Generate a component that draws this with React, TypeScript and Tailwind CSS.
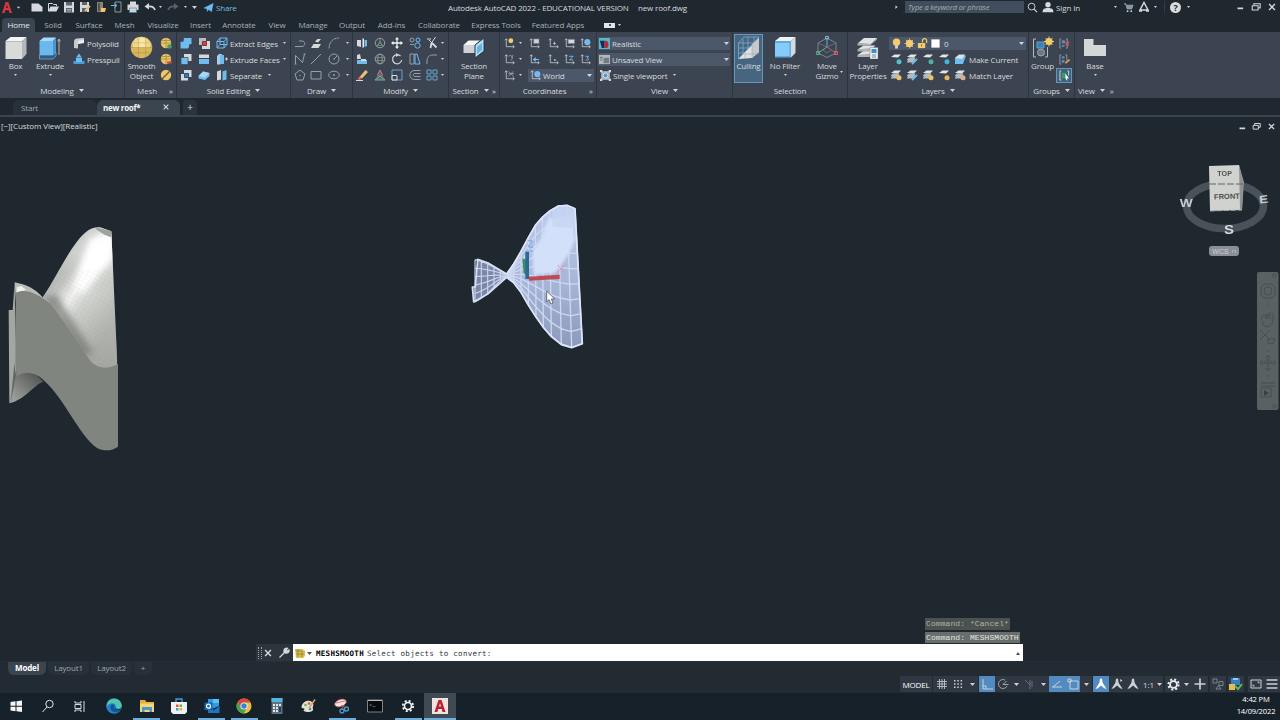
import React from 'react';
import clsx from 'clsx';

const L = '#d6d9db';
const B = '#6fbcf0';
const D = '#94a0ab';
const Y = '#ecc668';

// All ribbon glyphs live on a 12x12 grid
const art: Record<string, React.ReactNode> = {
  newFile: <path d="M.5 2.500h7L11.500 6v4.500H.5z" fill={L} />,
  open: <><path d="M1.500 10V2.500h4l1 1h3V5" stroke={L} /><path d="M1 10.500 3.500 5.500H12l-2.500 5z" fill={L} /></>,
  save: <><path d="M1 1h10v10.500H1z" fill={L} /><path d="M3 1h6v3.500H3zM3 7h6v4.500H3z" fill="#5c656d" /><path d="M4 8.500h4M4 10h4" stroke={L} strokeWidth=".6" /></>,
  saveAs: <><path d="M1 1h9v10H1z" fill={L} /><path d="M3 1h5v3H3zM3 7h5v4H3z" fill="#5c656d" /><path d="m6 10 5-5" stroke={Y} strokeWidth="1.800" /></>,
  webOpen: <><path d="M2 1h6v10H2z" fill="#8b8578" /><path d="M3 2h2v8H3z" fill="#4c5257" /><path d="M6 7h5l-1 4H6z" fill={Y} /></>,
  webSave: <><path d="M4 1h6v10H4z" stroke="#8e979e" /><path d="M0 4.500h5M3.500 2.500 6 4.500l-2.500 2" stroke={B} /></>,
  print: <><path d="M3 .5h6V4H3z" fill={L} /><path d="M.5 3.500h11V9H.5z" fill={L} /><path d="M2.500 7h7v4.500h-7z" fill="#bcd9ec" stroke="#6b7780" strokeWidth=".6" /></>,
  undo: <><path d="M11 9C10 6 7 5 3.500 5.500" stroke={L} strokeWidth="1.700" /><path d="M.5 5.500 5 2v6.500z" fill={L} /></>,
  redo: <><path d="M1 9c1-3 4-4 7.500-3.500" stroke="#59626a" strokeWidth="1.700" /><path d="M11.500 5.500 7 2v6.500z" fill="#59626a" /></>,
  plane: <path d="M.5 6.500 11.500 1 9.500 11 6 8.500 4.500 11 4 7.500z" fill={B} stroke="#2a6fa0" strokeWidth=".3" />,
  search: <><circle cx="5" cy="5" r="3.700" stroke={L} /><path d="m7.700 7.700 3.300 3.300" stroke={L} strokeWidth="1.300" /></>,
  person: <><circle cx="6" cy="3.700" r="2.700" fill={L} /><path d="M.5 11.200c.3-3.500 2-4.200 5.500-4.200s5.200.7 5.500 4.200z" fill={L} /></>,
  cart: <><path d="M1 2h2l1.500 5.500h5L11 3.500H3.500" stroke={D} fill="#8b959d" /><circle cx="5" cy="10" r="1" fill={L} /><circle cx="9" cy="10" r="1" fill={L} /></>,
  autodesk: <path d="M6 1.500 10 9H2zM1 10h3M8 10h3" stroke={L} strokeWidth="1.500" />,
  polysolid: <><path d="M1 5c0-2 1-3.500 3-3.500L11 1v5L7 6.500 5 7v4.500L1 11z" fill="#c9cccf" /><path d="M5 7V5.500C5 4 6 3.500 7 3.500L11 3v3l-4 .5z" fill="#eceeef" /></>,
  presspull: <><path d="M.5 8h11v3H.5z" fill="#4a9ed6" /><path d="M3 4.500h6V9H3z" fill={B} /><path d="M6 .5 8.500 4h-5z" fill={B} /></>,
  sphereAdd: <><circle cx="6" cy="6" r="5.200" fill={Y} /><path d="M1 6h10M6 1v10M2 3.500h8" stroke="#957633" strokeWidth=".6" /><circle cx="9.500" cy="9.500" r="2.300" fill="#45a15d" /></>,
  sphereSub: <><circle cx="6" cy="6" r="5.200" fill={Y} /><path d="M1 6h10M6 1v10M2 3.500h8" stroke="#957633" strokeWidth=".6" /><path d="M7 9.500h5" stroke="#c8443d" strokeWidth="2" /></>,
  sphereCut: <><circle cx="6" cy="6" r="5.200" fill={Y} /><path d="m2 10 8-8" stroke="#6e6138" strokeWidth="1.500" /></>,
  union: <path d="M4 1h7.500v6L9 7.500V10l-1 1.500H.5V5L3.500 4.500z" fill={B} />,
  subtract: <><path d="M1 1h7v7H1z" fill="#b5bcc2" /><path d="M4 4h8v8H4z" fill={L} /><path d="M4.500 4.500h4v4h-4z" fill="#c7484b" stroke="#8f2f33" /></>,
  intersect: <><path d="M4 1h7.500v7H8v3.500H1V5h3z" fill={L} /><path d="M4.500 4.500h4v4h-4z" fill="#387bb0" stroke="#26516f" /></>,
  interfere: <><path d="M4 1h7.500v7H4z" fill={L} /><path d="M1 4.500h7v7H1z" fill={B} stroke="#3a454f" strokeWidth=".7" /></>,
  slice: <><path d="M1 1.500h10v3.500H1z" fill={L} /><path d="M1 6h10v5H1z" fill={B} /></>,
  thicken: <><path d="M.5 7 5 2.500l6.500 1.500v3L7 11 .5 9.500z" fill={B} /><path d="M.5 7 5 2.500l6.500 1.500L7 8.500z" fill="#a9d8f6" /></>,
  extractEdges: <path d="M1 4.500 4 1h7v6.500L8 11H1zM1 4.500h7V11M8 4.500 11 1M4 1v6.500L1 11M4 7.500h7" stroke={B} />,
  extrudeFaces: <><path d="M1 3 3 1h3v9l-2 1.500H1z" fill="#a8cde6" /><path d="M4 2h4v9H4z" fill={B} /><path d="M8.500 6H10m0-1.500L11.800 6 10 7.500z" fill={L} stroke={L} strokeWidth=".5" /></>,
  separate: <><path d="M1 2.500 5 1v9.500L1 11.500z" fill={L} /><path d="M6.500 2.500 10.500 1v9.500l-4 1z" fill={B} /></>,
  polyline: <path d="M1 9.500h7c4-.5 3.500-5.500 0-5.500H5" stroke={D} />,
  helix: <><path d="m1 11 2.500-4H11l-2.500 4z" fill={L} /><path d="M5 4.500 7.500 2H11L8 5.500z" fill={L} /></>,
  arc: <path d="M1 11.500C1 5 5 1 11 1" stroke={D} strokeDasharray="3 .5" />,
  spline: <path d="M1.500 11V2.500l7 7L10.500 1M.5 11h2M9.500 1h2" stroke={D} />,
  line: <path d="M1 11 11 1" stroke={D} />,
  circle: <><circle cx="6" cy="6" r="5" stroke={D} /><path d="m6 6 3.500-3.500" stroke={D} /><circle cx="6" cy="6" r=".8" fill={D} /></>,
  polygon: <><path d="m6 1 5 4-2 6H3L1 5z" stroke={D} /><circle cx="6" cy="6.500" r=".7" fill={D} /></>,
  rect: <path d="M1 2.500h10v7.500H1z" stroke={D} />,
  ellipse: <><ellipse cx="6" cy="6" rx="5.300" ry="3.800" stroke={D} /><circle cx="6" cy="6" r="1" fill={D} /></>,
  mirror3d: <><path d="M1 3h4v7l-4-1z" fill={L} /><path d="M6.500 1 8 2v8l-1.500 1z" fill="#eee" /><path d="M8.500 3H11v6l-2.500 1z" fill={B} /></>,
  gizmo: <><circle cx="6" cy="6" r="4.700" stroke={D} /><path d="M6 1v5M6 6 2 9.500" stroke="#c0686c" /><path d="m6 6 4 3.500M3.500 8.500 6 4l2.500 4.500z" stroke="#5d9a86" strokeWidth=".8" /></>,
  move: <><path d="M6 1.500v9M1.500 6h9" stroke="#f2f3f4" strokeWidth="1.300" /><path d="M6 0 8 2.500H4zM6 12l2-2.500H4zM0 6l2.500-2v4zM12 6 9.500 4v4z" fill="#f2f3f4" /></>,
  copy: <><circle cx="3" cy="3" r="2" stroke={D} /><circle cx="9" cy="3" r="2" stroke={B} /><circle cx="8.500" cy="8.500" r="2.700" stroke={B} /><path d="M1 7.500h4" stroke={D} /></>,
  trim: <><path d="M1 2h4M9.500 0 5.500 6M3 3l3 3" stroke={L} /><path d="m5.500 6-1 5M6 6l4.500 4.500" stroke={L} strokeWidth="1.800" /></>,
  align3d: <><path d="M1 2 4 1l1 5H1z" fill={L} /><path d="M1 7h10v4H1z" fill={B} /><path d="M5 6h5v2H5z" fill={L} /></>,
  rotate3d: <><circle cx="6" cy="6" r="4.800" stroke={D} /><ellipse cx="6" cy="6" rx="2.200" ry="4.800" stroke="#72aa95" /><path d="M1 4.500h10M1 7.500h10" stroke="#b48287" strokeWidth=".7" /></>,
  rotate: <><path d="M9.500 3A4.600 4.600 0 1 0 10.700 7" stroke={L} strokeWidth="1.200" /><path d="M5 0v4l3-2z" fill={L} /></>,
  stretch: <><path d="M1 1h4v10H1z" stroke={D} /><path d="M6 1h2l3 10H6z" stroke={B} /></>,
  fillet: <path d="M1 11V8c0-4 2-6 6-6h4" stroke={D} />,
  erase: <><path d="m3.500 8 6-7L12 3 6 9.500z" fill="#e9c079" /><path d="m3.500 7.500 2.500 2L3.500 11 1.500 10z" fill="#e6605a" /><path d="M0 11.500h7" stroke={L} /></>,
  scale3d: <><path d="m6 1 5 10H1z" fill="#59666f" /><path d="M6 1 3.500 6 6 8l2.500-2z" stroke="#c9797c" /><path d="M6 7 1 11h10z" stroke="#78ad98" /></>,
  scale: <><path d="M1 1h10v10H1z" stroke={B} strokeWidth=".8" /><path d="M1 6.500h5V11H1z" stroke={L} /></>,
  offset: <path d="M11.500 1.500H5C-.5 2-.5 10 5 10.500h6.500M11.500 4.500H6c-2.500 0-2.500 3 0 3h5.500" stroke={D} />,
  array: <path d="M1 1h4v4H1zM7 1h4v4H7zM1 7h4v4H1zM7 7h4v4H7z" stroke="#68a5cf" />,
  ucs: <path d="M2.500 1v8.500H11M1 2.500 2.500.8 4 2.500M9.500 8 11.300 9.500 9.500 11" stroke={L} strokeWidth=".8" />,
  viewport: <><path d="M2 2h8v8H2z" fill="#8fa0ad" stroke={L} /><circle cx="6" cy="6" r="2.700" fill="#4f97cf" stroke="#e8ecee" /><path d="M0 0h2.500v2.500H0zM9.500 0H12v2.500H9.500zM0 9.500h2.500V12H0zM9.500 9.500H12V12H9.500z" fill={L} /></>,
  visual: <><path d="M0 0h12v12H0z" fill="#57b9c8" /><path d="M1 3h5v8H3z" fill="#122c66" /><path d="M6 3h2c3 1 3 5 1 8H6z" fill="#b32c34" /></>,
  namedView: <><path d="M0 1h12v10H0z" fill="#b4b9bb" /><path d="M1 3h3v2H1zM5 4h6v6H5zM1 6h3v1H1z" fill="#727b82" /></>,
  bulb: <><circle cx="6" cy="4.500" r="4" fill="#f6cb69" /><path d="M4.500 8h3v3.500h-3z" fill={L} /></>,
  sun: <><circle cx="6" cy="6" r="4" fill="#f6cb69" /><path d="M6 .5v11M.5 6h11M2 2l8 8M10 2l-8 8" stroke="#f6cb69" strokeWidth=".8" /></>,
  lock: <><path d="M1 5.500h8V11H1z" fill="#f6cb69" /><path d="M6 5V3a2 2 0 0 1 4.500 0v2.500" stroke="#f6cb69" strokeWidth="1.300" /><path d="M4.500 7h1v2h-1z" fill="#605438" /></>,
  swatch: <path d="M1.500 1.500h9v9h-9z" fill="#fff" />,
  groupDel: <><path d="M2.500 1H1v10h1.500M7.500 1H9v10H7.500" stroke={D} /><path d="M3 2.500h3.500V6H3zM3 7.500h3v2H3z" fill="#5a8db4" /><path d="m7 4 4 4M11 4 7 8" stroke="#d4535a" strokeWidth="1.500" /></>,
  groupEdit: <><path d="M2.500 1H1v10h1.500M7 1h1.500v6" stroke={D} /><path d="M3 2.500h3V5H3zM3 6.500h3v3H3z" fill="#5a8db4" /><path d="m7 10 4.500-4" stroke="#eaa35c" strokeWidth="1.800" /></>,
  groupPick: <><path d="M2.500 1H1v10h1.500M9 1h1.500v5" stroke={L} /><path d="M3 3h5v6H3z" fill="#3c9c60" /><path d="m7 4 4 5H9v3L7 9z" fill="#fff" /></>,
  wrench: <path d="m1.500 10.500 5-5M6 3.500C6 1.500 8 .8 9.500 1.300L8 3l1 1.300L11 3c.5 2-1.500 3.500-3.500 3L6 5z" stroke={L} strokeWidth="1.300" fill={L} />,
  close: <path d="m2.500 2.500 7 7M9.500 2.500l-7 7" stroke={L} strokeWidth="1.700" />,
  restore: <><path d="M3.500 4V2H11v5H9" stroke={L} strokeWidth="1.300" /><path d="M1.500 4.500h7V9.500h-7z" stroke={L} strokeWidth="1.300" /></>,
  min: <path d="M2 8.500h7.500" stroke={L} strokeWidth="2.300" />,
  yellowMesh: <><path d="M1 2h7.500L11 4v5L9 11H2z" fill="#d8bf4b" /><path d="M2 4h6v6M4 2v8M2 7h8" stroke="#8c7a35" strokeWidth=".7" /></>,
};

// layer tools: a stack or sheet plus a small badge
const layerArt = (stack: boolean, badge: string) => (
  <>
    {stack && <path d="M1 8.500 3.500 6.500h6L8 9.500H1zM1 6.200 3.500 4.500h6L8 7.200H1z" fill="#b5bcc1" />}
    <path d="m1 4 3.500-2.500H11L8 4.500z" fill="#e3e5e6" />
    {badge === 'edit' ? <path d="m6 11 5-5" stroke={B} strokeWidth="1.800" /> : <circle cx="9" cy="8.700" r="2.500" fill={badge} />}
  </>
);
art.layOff = layerArt(false, '#54c0c8');
art.layIso = layerArt(true, 'edit');
art.layFrz = layerArt(false, '#4eb0a5');
art.layLock = layerArt(false, '#3eb6d8');
art.layCur = <><path d="m1 5 3-2.500h8L9 11H1z" fill={B} /><path d="m1 5 4-3.500h6L8 6z" fill="#dce1e4" /></>;
art.layOn = layerArt(true, '#f0c35e');
art.layUniso = layerArt(true, 'edit');
art.layThw = layerArt(true, '#f0c35e');
art.layUnl = layerArt(false, '#e9b658');
art.layMatch = layerArt(true, '#dfac8c');

// UCS variants share the axis tripod
const ucsMark: Record<string, React.ReactNode> = {
  ucsBulb: <circle cx="7.500" cy="3" r="2.600" fill="#f6cb69" />,
  ucsNamed: <path d="M5 1h6v5H5z" fill="#cdd2d5" stroke="#69757e" strokeWidth=".6" />,
  ucsOrigin: <path d="M7 4v3.500M5.500 6h3" stroke={L} strokeWidth=".8" />,
  ucsFace: <path d="M4.500 1.500h7v4.500h-7z" fill={L} stroke="#78838b" strokeWidth=".7" />,
  ucsWorld: <circle cx="8" cy="4.500" r="3.300" fill={B} />,
  ucsIcon: <path d="M5 2.500c4-3 6 3 2 4.500M8 4l2-3" stroke={D} />,
  ucsPrev: <path d="M11 6H6m1.500-2L5 6l2.500 2" stroke={B} strokeWidth="1.300" />,
  ucsPoint: <path d="M6.500 5.500h2v2h-2z" fill={B} />,
  ucsZ: <path d="M5.500 2.500H10l-4 4h4" stroke={B} />,
  ucs3: <path d="M6 2.500h3.500L7.500 4.500c3 0 2 3-1.500 2" stroke={B} />,
  ucsView: <path d="M5 1.500 10.500 7M10 1.500 5 7M5 4h6" stroke={D} />,
};
Object.keys(ucsMark).forEach((k) => {
  art[k] = <>{art.ucs}{ucsMark[k]}</>;
});

const Ic = ({ n, s = 12 }: { n: string; s?: number }) => (
  <svg width={s} height={s} viewBox="0 0 12 12" fill="none" className="shrink-0">
    {art[n]}
  </svg>
);

const Caret = ({ className }: { className?: string }) => (
  <svg width="5" height="3" viewBox="0 0 5 3" className={clsx('shrink-0', className)}>
    <path d="M0 0h5L2.500 3z" fill="#cfd3d6" />
  </svg>
);

const TinyCaret = ({ className }: { className?: string }) => (
  <svg width="3" height="2" viewBox="0 0 3 2" className={clsx('shrink-0', className)}>
    <path d="M0 0h3L1.500 2z" fill="#cfd3d6" />
  </svg>
);

const Cell = ({ w, children }: { w: string; children?: React.ReactNode }) => (
  <div className={clsx('flex h-full shrink-0 items-center justify-center', w)}>{children}</div>
);

const Row = ({ children }: { children: React.ReactNode }) => (
  <div className="flex h-4 shrink-0 items-center">{children}</div>
);

interface PanelProps {
  w: string;
  title: string;
  caret?: boolean;
  launcher?: boolean;
  children: React.ReactNode;
}

const Panel = ({ w, title, caret, launcher, children }: PanelProps) => (
  <section className={clsx('flex shrink-0 flex-col border-r border-[#2c353f]', w)}>
    <div className="flex h-[52px] pt-[3px]">{children}</div>
    <div className="flex h-[13px] items-center">
      <div className="flex flex-1 items-center justify-center gap-[5px]">
        {title}
        {caret && <Caret />}
      </div>
      {launcher && <span className="w-[7px] text-[8px] leading-none">»</span>}
    </div>
  </section>
);

const BigTool = ({ w, icon, lines, caret }: { w: string; icon: React.ReactNode; lines: string[]; caret?: boolean }) => (
  <div className={clsx('flex shrink-0 flex-col items-center', w)}>
    <div className="flex h-[25px] items-center">{icon}</div>
    {lines.map((t) => (
      <span key={t} className="flex h-[10.5px] items-center whitespace-nowrap">{t}</span>
    ))}
    {caret && <TinyCaret className="mt-[3px]" />}
  </div>
);

const IconGrid = ({ rows, cols }: { rows: string[][]; cols: string[] }) => (
  <div className="flex flex-col">
    {rows.map((r) => (
      <Row key={r[0]}>
        {r.map((n, i) => (
          <Cell key={n + i} w={cols[i]}>{n === 'caret' ? <TinyCaret /> : <Ic n={n} s={n.startsWith('ucs') ? 11 : 12} />}</Cell>
        ))}
      </Row>
    ))}
  </div>
);

const TitleBar = () => (
  <header className="flex h-4 items-center bg-[#1f272f] pb-[2px]">
    <Cell w="w-[14px]">
      <svg width="10" height="11" viewBox="0 0 11 12"><path d="M0 12 4 0h3l4 12H8L7.500 9h-4L3 12zM4.500 6.500h2L5.500 3z" fill="#d8353c" fillRule="evenodd" /></svg>
    </Cell>
    <Cell w="w-[15px]"><Caret className="-ml-[6px] scale-75" /></Cell>
    {['newFile', 'open', 'save', 'saveAs', 'webOpen', 'webSave', 'print'].map((n) => (
      <Cell key={n} w="w-4"><Ic n={n} s={12} /></Cell>
    ))}
    <Cell w="w-[17px]"><Ic n="undo" /></Cell>
    <Cell w="w-[5px]"><TinyCaret /></Cell>
    <Cell w="w-[20px]"><Ic n="redo" /></Cell>
    <Cell w="w-[4px]"><TinyCaret /></Cell>
    <Cell w="w-[15px]"><Caret /></Cell>
    <Cell w="w-[12px]"><Ic n="plane" s={11} /></Cell>
    <span className="ml-[2px] w-[232px] text-[#79b9e2]">Share</span>
    <span className="w-[190px] whitespace-nowrap tracking-[-0.15px]">Autodesk AutoCAD 2022 - EDUCATIONAL VERSION</span>
    <span className="w-[249px] whitespace-nowrap">new roof.dwg</span>
    <Cell w="w-[18px]"><TinyCaret className="-rotate-90 scale-125" /></Cell>
    <div className="flex h-3 w-[119px] items-center bg-[#414d5c] pl-[3px] text-[7.500px] italic text-[#a6adb5]">Type a keyword or phrase</div>
    <Cell w="w-[17px]"><Ic n="search" s={11} /></Cell>
    <Cell w="w-[13px]"><Ic n="person" /></Cell>
    <span className="ml-[2px] w-[54px] tracking-[-0.1px]">Sign In</span>
    <Cell w="w-[10px]"><TinyCaret /></Cell>
    <Cell w="w-4"><Ic n="cart" s={11} /></Cell>
    <Cell w="w-4"><Ic n="autodesk" s={12} /></Cell>
    <Cell w="w-[7px]"><TinyCaret /></Cell>
    <div className="ml-[5px] h-3 w-px bg-[#333c46]" />
    <Cell w="w-[21px]">
      <span className="flex size-[11px] items-center justify-center rounded-full bg-[#d9dcde] text-[9px] font-bold text-[#1f272f]">?</span>
    </Cell>
    <Cell w="w-[4px]"><TinyCaret /></Cell>
    <div className="ml-auto flex">
      <Cell w="w-4"><Ic n="min" s={9} /></Cell>
      <Cell w="w-4"><Ic n="restore" s={10} /></Cell>
      <Cell w="w-4"><Ic n="close" s={10} /></Cell>
    </div>
  </header>
);

const menu: [string, string][] = [
  ['Home', 'w-[33px]'], ['Solid', 'w-[36px]'], ['Surface', 'w-[36px]'], ['Mesh', 'w-[35px]'], ['Visualize', 'w-[42px]'],
  ['Insert', 'w-[33px]'], ['Annotate', 'w-[44px]'], ['View', 'w-[32px]'], ['Manage', 'w-[40px]'], ['Output', 'w-[38px]'],
  ['Add-ins', 'w-[41px]'], ['Collaborate', 'w-[54px]'], ['Express Tools', 'w-[60px]'], ['Featured Apps', 'w-[64px]'],
];

const MenuTabs = () => (
  <nav className="flex h-4 bg-[#1f272f] pl-[2px] pt-[2px] tracking-[-0.015em] text-[#a9b0b7]">
    {menu.map(([t, w]) => (
      <div key={t} className={clsx('flex shrink-0 items-center justify-center whitespace-nowrap pb-[2px]', w, t === 'Home' && 'rounded-t-sm bg-[#3b4552] text-[#e3e6e8]')}>{t}</div>
    ))}
    <div className="ml-[14px] flex items-center gap-[3px]">
      <div className="flex h-[5px] w-[11px] items-center justify-center bg-[#e3e6e8]"><div className="size-[2px] bg-[#4c555e]" /></div>
      <TinyCaret />
    </div>
  </nav>
);

const Combo = ({ icon, label, className, size }: { icon: string; label: string; className: string; size?: number }) => (
  <div className={clsx('flex h-[13px] items-center bg-[#4c586a] px-[2px]', className)}>
    <Ic n={icon} s={size ?? 11} />
    <span className="ml-[2px] flex-1 whitespace-nowrap">{label}</span>
    <Caret />
  </div>
);

const BoxIcon = () => (
  <svg width="22" height="24" viewBox="0 0 22 24"><path d="m.5 5 5-4H21.500L17 5.500H.5z" fill="#f5f5f4" /><path d="M.5 5.500H17V23H.5z" fill="#d9dada" /><path d="m17 5.500 4.500-4.500v17L17 23z" fill="#b5b7b8" /></svg>
);
const ExtrudeIcon = () => (
  <svg width="22" height="24" viewBox="0 0 22 24"><path d="m.5 5 4-3.500H17L14 5z" fill="#a9dafa" /><path d="M.5 5H14v14H.5z" fill="#69b8ef" /><path d="m14 5 3-3.500v15L14 19z" fill="#4897d1" /><path d="M.5 19H14l3-2.500V20l-3 3H.5z" fill="#315a7c" stroke="#7cc5f5" strokeWidth=".6" /><path d="M20 4v15M18.700 5.500 20 3l1.300 2.500" stroke="#ccd2d6" fill="none" strokeWidth=".8" /></svg>
);
const SmoothIcon = () => (
  <svg width="23" height="23" viewBox="0 0 22 22"><circle cx="11" cy="11" r="10.300" fill="#d9b75c" /><path d="M2 6.500 5.500 2 11 .8l5.500 1.700L20 6.500l-1 5H3z" fill="#efd88b" /><path d="M9 2h5v9H9z" fill="#f7e7ab" /><path d="M1 11h20M3 16h16M8 11v9M15 11v9" stroke="#b3954a" strokeWidth=".6" /><path d="M2.500 6.500h17M8 1.500V11M15 1.500V11" stroke="#c9ab5c" strokeWidth=".5" /></svg>
);
const SectionIcon = () => (
  <svg width="22" height="22" viewBox="0 0 22 22"><path d="m.5 8 5-4.500H17L12 8z" fill="#f5f5f5" /><path d="M.5 8H12v8H.5z" fill="#cfd2d4" /><path d="m12 8 9-7v13l-9 7z" fill="#b8dcf1" stroke="#2a3744" /><path d="m14 10 5-4v7l-5 4z" fill="#63b5e8" /></svg>
);
const CullingIcon = () => (
  <svg width="22" height="24" viewBox="0 0 22 24"><path d="M.5 7 6 1h15M.5 7v16L21 1M.5 7H16M.5 12h11M.5 17H7M5 3v14M10 1v15M16 1v6" stroke="#78aed2" strokeWidth=".8" fill="none" /><path d="M.5 23 21 2v14l-7 6z" fill="#dfe0df" /><path d="m14 8.500 7-6.500v14l-7 6z" fill="#c7cac9" /><path d="M7 17v5.500M14 9v13M7 18h14" stroke="#969b9d" strokeWidth=".5" /></svg>
);
const FilterIcon = () => (
  <svg width="22" height="23" viewBox="0 0 22 23"><path d="m1 5 5-4h15.500L17 5z" fill="#f1f3f4" /><path d="m17 5 4.500-4v16L17 21.500z" fill="#d5d9dc" /><path d="M1 5h16v16.500H1z" fill="#5cabe5" /><path d="M1 7h14.500v13H1z" fill="#85ccf8" /></svg>
);
const GizmoIcon = () => (
  <svg width="22" height="23" viewBox="0 0 22 23" fill="none"><path d="m11 2 9 5v10l-9 4.500L2 17V7z" stroke="#8994a0" strokeWidth=".8" /><path d="M11 11V2" stroke="#75a7cc" /><path d="m11 11-9 6" stroke="#69a886" /><path d="m11 11 9 6" stroke="#c55d67" /><path d="M2 7l9 4 9-4M7 14l4 3 4-3" stroke="#6f7f90" strokeWidth=".7" /><path d="M9.500.5h3V3h-3z" stroke="#82b2d3" /><path d="M.6 15.500h3v3h-3z" stroke="#60b080" /><path d="M18.500 15.500h3v3h-3z" stroke="#d75f69" /></svg>
);
const LayerPropsIcon = () => (
  <svg width="22" height="22" viewBox="0 0 22 22"><path d="m.5 18 6-4h12l-5 4zM.5 12.500l6-4h12l-5 4.500zM.5 6.500 7 1h13l-6 6z" fill="#e2e3e3" /><path d="M.5 6.500v2H13l7-6V1L14 7zM.5 12.500v2H13l5-4M.5 18v2H13l5-4" fill="#aeb3b6" /><path d="M13 10.500h8V22h-8z" fill="#edf0f1" stroke="#65717a" strokeWidth=".4" /><path d="M14.500 12h5v4h-5z" fill="#3e8fca" /><path d="M15 18h4M15 20h4" stroke="#7d858a" /></svg>
);
const GroupIcon = () => (
  <svg width="22" height="23" viewBox="0 0 22 23" fill="none"><path d="M4 3H1.500v18H4M13 21h2.500V11" stroke="#b5bcc2" /><path d="M5 6h7v6H5z" fill="#3f7fae" stroke="#5da3d5" /><circle cx="9" cy="16.500" r="3.500" fill="#6c7780" stroke="#a0a8af" /><circle cx="17" cy="5.500" r="3.600" fill="#f6cb69" /><path d="M17 .5v10M12 5.500h10M13.500 2l7 7M20.500 2l-7 7" stroke="#f6cb69" /></svg>
);
const BaseIcon = () => (
  <svg width="22" height="17" viewBox="0 0 22 17"><path d="M0 0h9.500v6H22v11H0z" fill="#d4d6d7" /></svg>
);

const Ribbon = () => (
  <div className="flex h-[66px] bg-[#3b4450]">
    <Panel w="w-[125px]" title="Modeling" caret>
      <BigTool w="w-[31px]" icon={<BoxIcon />} lines={['Box']} caret />
      <BigTool w="w-[38px]" icon={<ExtrudeIcon />} lines={['Extrude']} caret />
      <div className="flex flex-col pl-[4px]">
        <Row><Ic n="polysolid" /><span className="ml-[2px]">Polysolid</span></Row>
        <Row><Ic n="presspull" /><span className="ml-[2px]">Presspull</span></Row>
      </div>
    </Panel>
    <Panel w="w-[52px]" title="Mesh" launcher>
      <BigTool w="w-[33px]" icon={<SmoothIcon />} lines={['Smooth', 'Object']} />
      <IconGrid rows={[['sphereAdd'], ['sphereSub'], ['sphereCut']]} cols={['w-[16px]']} />
    </Panel>
    <Panel w="w-[114px]" title="Solid Editing" caret>
      <IconGrid rows={[['union', 'subtract', 'extractEdges'], ['interfere', 'slice', 'extrudeFaces'], ['intersect', 'thicken', 'separate']]} cols={['w-[18px]', 'w-[18px]', 'w-[17px]']} />
      <div className="flex flex-1 flex-col">
        <Row><span className="w-[53px] whitespace-nowrap">Extract Edges</span><TinyCaret /></Row>
        <Row><span className="w-[53px] whitespace-nowrap">Extrude Faces</span><TinyCaret /></Row>
        <Row><span className="w-[38px]">Separate</span><TinyCaret /></Row>
      </div>
    </Panel>
    <Panel w="w-[62px]" title="Draw" caret>
      <IconGrid
        rows={[['polyline', 'helix', 'arc', 'caret'], ['spline', 'line', 'circle', 'caret'], ['polygon', 'rect', 'ellipse', 'caret']]}
        cols={['w-[17px]', 'w-[15px]', 'w-[22px]', 'w-[5px]']}
      />
    </Panel>
    <Panel w="w-[96px]" title="Modify" caret>
      <IconGrid
        rows={[
          ['mirror3d', 'gizmo', 'move', 'copy', 'trim', 'caret'],
          ['align3d', 'rotate3d', 'rotate', 'stretch', 'fillet', 'caret'],
          ['erase', 'scale3d', 'scale', 'offset', 'array', 'caret'],
        ]}
        cols={['w-[17px]', 'w-[20px]', 'w-[13px]', 'w-[23px]', 'w-[11px]', 'w-[11px]']}
      />
    </Panel>
    <Panel w="w-[51px]" title="Section" caret launcher>
      <BigTool w="w-[50px]" icon={<SectionIcon />} lines={['Section', 'Plane']} />
    </Panel>
    <Panel w="w-[97px]" title="Coordinates" launcher>
      <div className="flex flex-col">
        <IconGrid
          rows={[['ucsBulb', 'caret', 'ucsNamed', 'ucsOrigin', 'ucsFace', 'ucsWorld'], ['ucsIcon', 'caret', 'ucsPrev', 'ucsPoint', 'ucsZ', 'ucs3']]}
          cols={['w-[18px]', 'w-[5px]', 'w-[22px]', 'w-[16px]', 'w-[16px]', 'w-[16px]']}
        />
        <Row>
          <Cell w="w-[18px]"><Ic n="ucsView" s={11} /></Cell>
          <Cell w="w-[5px]"><TinyCaret /></Cell>
          <Combo icon="ucsWorld" label="World" className="ml-[5px] w-[66px]" />
        </Row>
      </div>
    </Panel>
    <Panel w="w-[136px]" title="View" caret>
      <div className="flex flex-col pl-px">
        <Row><Combo icon="visual" label="Realistic" className="w-[132px] px-px" /></Row>
        <Row><Combo icon="namedView" label="Unsaved View" className="w-[132px] px-px" size={11} /></Row>
        <Row><Cell w="w-[15px]"><Ic n="viewport" s={11} /></Cell><span className="w-[60px] whitespace-nowrap">Single viewport</span><TinyCaret /></Row>
      </div>
    </Panel>
    <Panel w="w-[115px]" title="Selection">
      <div className="-mt-px ml-px h-[49px] w-[29px] border border-[#6298be] bg-[#47657f]">
        <BigTool w="w-[27px]" icon={<CullingIcon />} lines={['Culling']} />
      </div>
      <BigTool w="w-[44px]" icon={<FilterIcon />} lines={['No Filter']} caret />
      <BigTool w="w-[40px]" icon={<GizmoIcon />} lines={['Move', 'Gizmo']} />
      <TinyCaret className="-ml-[7px] mt-[36px]" />
    </Panel>
    <Panel w="w-[181px]" title="Layers" caret>
      <BigTool w="w-[40px]" icon={<LayerPropsIcon />} lines={['Layer', 'Properties']} />
      <div className="flex flex-col">
        <Row>
          <div className="ml-px flex h-[13px] w-[137px] items-center bg-[#4c586a] pr-[2px]">
            <Cell w="w-[14px]"><Ic n="bulb" s={11} /></Cell>
            <Cell w="w-[12px]"><Ic n="sun" s={11} /></Cell>
            <Cell w="w-[14px]"><Ic n="lock" s={11} /></Cell>
            <Cell w="w-[13px]"><Ic n="swatch" s={11} /></Cell>
            <span className="ml-[2px] flex-1">0</span>
            <Caret />
          </div>
        </Row>
        {[['layOff', 'layIso', 'layFrz', 'layLock', 'layCur', 'Make Current'], ['layOn', 'layUniso', 'layThw', 'layUnl', 'layMatch', 'Match Layer']].map((r) => (
          <Row key={r[0]}>
            {r.slice(0, 5).map((n) => <Cell key={n} w="w-4"><Ic n={n} /></Cell>)}
            <span className="ml-px whitespace-nowrap">{r[5]}</span>
          </Row>
        ))}
      </div>
    </Panel>
    <Panel w="w-[46px]" title="Groups" caret>
      <BigTool w="w-[27px]" icon={<GroupIcon />} lines={['Group']} />
      <div className="flex flex-col">
        <Row><Cell w="w-[16px]"><Ic n="groupDel" s={11} /></Cell></Row>
        <Row><Cell w="w-[16px]"><Ic n="groupEdit" s={11} /></Cell></Row>
        <Row><div className="flex h-[15px] w-[16px] items-center justify-center border border-[#6298be] bg-[#42617a]"><Ic n="groupPick" s={11} /></div></Row>
      </div>
    </Panel>
    <section className="flex w-[42px] flex-col">
      <div className="flex h-[52px] pt-[3px]"><BigTool w="w-[40px]" icon={<BaseIcon />} lines={['Base']} caret /></div>
      <div className="flex h-[13px] items-center gap-[5px] pl-[3px]">View <Caret /><span className="text-[8px] leading-none">»</span></div>
    </section>
  </div>
);

const FileTabs = () => (
  <div className="flex h-[19px] items-end border-b-2 border-[#3b4550] bg-[#1f272f] pl-[13px]">
    <div className="flex h-[15px] w-[84px] items-center rounded-t-md bg-[#28313a] pb-px pl-[8px] text-[#a0a7ae]">Start</div>
    <div className="flex h-[15px] w-[83px] items-center rounded-t-md bg-[#3b4550] pb-px pl-[6px] pr-[10px] text-[#f3f4f5]">
      <span className="flex-1 font-bold tracking-[-0.035em]">new roof*</span>
      <Ic n="close" s={8} />
    </div>
    <div className="ml-[3px] flex h-[15px] w-[14px] items-center justify-center rounded-t-sm bg-[#2b343d] pb-px text-[10px]">+</div>
  </div>
);

const Saddle = () => (
  <svg width="160" height="250" viewBox="0 0 480 750" className="absolute left-0 top-[93px]">
    <defs>
      <linearGradient id="lit" x1="130" y1="190" x2="345" y2="330" gradientUnits="userSpaceOnUse">
        <stop offset="0" stopColor="#a5a8a3" />
        <stop offset=".25" stopColor="#c3c5c2" />
        <stop offset=".42" stopColor="#f3f4f2" />
        <stop offset=".58" stopColor="#d5d7d3" />
        <stop offset="1" stopColor="#b7bab5" />
      </linearGradient>
      <linearGradient id="litDown" x1="0" y1="130" x2="0" y2="470" gradientUnits="userSpaceOnUse">
        <stop offset="0" stopColor="#fff" stopOpacity=".3" />
        <stop offset=".35" stopColor="#a3a69f" stopOpacity="0" />
        <stop offset="1" stopColor="#8c8f8a" stopOpacity=".45" />
      </linearGradient>
      <linearGradient id="under" x1="120" y1="490" x2="50" y2="570" gradientUnits="userSpaceOnUse">
        <stop offset="0" stopColor="#4e514e" />
        <stop offset="1" stopColor="#999c97" />
      </linearGradient>
      <filter id="soft"><feGaussianBlur stdDeviation="9" /></filter>
      <pattern id="facets" width="14" height="12" patternUnits="userSpaceOnUse" patternTransform="rotate(28)">
        <path d="M0 0h14v12" fill="none" stroke="#777a75" strokeOpacity=".11" strokeWidth="3" />
      </pattern>
      <clipPath id="upper"><path d="M128 262C160 215 195 145 220 110 245 75 268 48 300 52L334 64 352 465 334 480 280 480C255 450 225 390 180 345 165 310 140 280 128 262z" /></clipPath>
    </defs>
    <g clipPath="url(#upper)">
      <path d="M100 40h270v450H100z" fill="url(#lit)" />
      <path d="M100 40h270v450H100z" fill="url(#litDown)" />
      <path d="M270 85 335 70 338 145 250 250 220 230z" fill="#fff" filter="url(#soft)" />
      <path d="M128 262 170 255 280 430 240 440z" fill="#6f726d" opacity=".65" filter="url(#soft)" />
      <path d="M100 180h270v310H100z" fill="url(#facets)" />
      <path d="m285 52 48 10v20l-20-8-22-14z" fill="#9fa39e" />
    </g>
    <path d="M26 300h12l6-83 6 280-22 83z" fill="#a3a6a1" />
    <path d="m44 217 24 6c25 8 43 20 60 39l20 14-20 20-80-15z" fill="#b9bcb6" />
    <path d="m50 232 14-4 14 12-28 8z" fill="#f0f1ec" />
    <path d="M28 580 45 490c30-15 60-5 85 25-30 10-52 52-102 65z" fill="url(#under)" />
    <path d="M48 248C75 235 110 250 148 278 190 325 230 400 275 457 298 480 330 475 354 462V710C335 724 310 724 290 713 240 680 190 560 130 510 105 485 75 484 50 498L46 460z" fill="#81857f" />
    <path d="m43 460 5 36-16 80z" fill="#656965" />
  </svg>
);

const wing = { xs: [155, 176, 198, 220, 241, 262, 284, 310, 336, 360], top: [252, 222, 184, 143, 106, 82, 63, 48, 46, 56], bot: [262, 278, 307, 345, 381, 412, 439, 462, 472, 461], lean: [0, 0, 0, 0, 2, 3, 5, 9, 14, 22] };
const tail = { xs: [60, 79, 98, 117, 136, 155], top: [209, 214, 222, 232, 243, 252], bot: [336, 325, 310, 291, 272, 262], lean: [0, 0, 0, 0, 0, 0] };

const gridPaths = (m: typeof wing, n: number) => {
  const lines: string[] = [];
  for (let k = 0; k <= n; k++) {
    const t = k / n;
    lines.push('M' + m.xs.map((x, i) => `${x + m.lean[i] * t} ${m.top[i] + (m.bot[i] - m.top[i]) * t}`).join('L'));
  }
  m.xs.forEach((x, i) => {
    lines.push(`M${x} ${m.top[i]}L${x + m.lean[i]} ${m.bot[i]}`);
  });
  return lines.join('');
};

const wingOutline = 'M155 252 176 222 198 184 220 143 241 106 262 82 284 63 310 48 336 46 360 56 382 461 350 473 319 464 289 440 265 412 243 381 220 345 198 307 176 278 155 262';

const SelectedMesh = () => (
  <svg width="150" height="170" viewBox="0 0 450 510" className="absolute left-[455px] top-[73px]">
    <defs>
      <filter id="glow"><feGaussianBlur stdDeviation="5" /></filter>
      <linearGradient id="veil" x1="0" y1="50" x2="0" y2="470" gradientUnits="userSpaceOnUse">
        <stop offset="0" stopColor="#bccbed" />
        <stop offset=".5" stopColor="#a9b7d8" />
        <stop offset="1" stopColor="#8d9abb" />
      </linearGradient>
    </defs>
    <path d={wingOutline} fill="url(#veil)" />
    <path d="M68 208 98 218 155 252V262L98 312 56 336 52 291 61 291z" fill="#7b87a6" />
    <path d={gridPaths(wing, 9)} stroke="#cdd8f2" strokeWidth="4" fill="none" />
    <path d={gridPaths(tail, 5)} stroke="#c8d3ee" strokeWidth="3.500" fill="none" />
    <path d="M280 85 352 78 360 150 340 195 300 250 235 255 232 185 258 145z" fill="#d3e0fa" filter="url(#glow)" />
    <path d="m290 60 35-12 33 12 5 55-70-5z" fill="#c6d4f2" opacity=".8" />
    <path d={wingOutline} fill="none" stroke="#dce5fa" strokeWidth="5" strokeLinejoin="round" />
    <path d="M155 252 98 218 68 208 61 291 52 291 56 336 98 312 155 262" fill="none" stroke="#d5def3" strokeWidth="5" strokeLinejoin="round" />
    <path d="m202 205 12 5v45l-8-5z" fill="#39905a" />
    <path d="M211 185h11v82h-11z" fill="#2f6798" />
    <path d="M216 183h18M218 152l14 1-13 17 15 2" stroke="#6aa9ea" strokeWidth="3" fill="none" />
    <path d="m221 260 93-6v13l-93 5z" fill="#bf4a51" />
    <path d="m308 225 22 25M330 224l-24 24" stroke="#d894b2" strokeWidth="3" />
    <path d="M275 303v32l7-6 6 13 6-3-5-12h10z" fill="#fff" stroke="#323a49" strokeWidth="2" />
  </svg>
);

const ViewCube = () => (
  <div className="absolute left-[1178px] top-[45px] h-[96px] w-[92px] font-['Liberation_Sans'] font-bold leading-none tracking-normal">
    <svg width="92" height="80" viewBox="0 0 92 80" fill="none">
      <ellipse cx="47" cy="44" rx="38.500" ry="22.500" stroke="#495258" strokeWidth="7.500" />
      <path d="m31 4 30-1 4 17-1 28-32 1z" fill="#d0d2cf" />
      <path d="m61 3 5 17-2 28-2-1z" fill="#8f9290" />
      <path d="M31 22h34" stroke="#60645f" strokeDasharray="7 2" />
      <path d="m32 49 32-1" stroke="#a3a6a1" strokeDasharray="5 2" />
    </svg>
    <span className="absolute left-[40px] top-[9px] scale-x-110 text-[6.500px] text-[#4c504e]">TOP</span>
    <span className="absolute left-[36px] top-[31px] -rotate-2 text-[7.500px] text-[#4c504e]">FRONT</span>
    <span className="absolute left-[3px] top-[36px] scale-x-125 text-[11px] text-[#c8cccf]">W</span>
    <span className="absolute left-[82px] top-[32px] -rotate-6 scale-x-125 text-[11px] text-[#c8cccf]">E</span>
    <span className="absolute left-[47px] top-[62px] scale-x-125 text-[12px] text-[#d9dcde]">S</span>
    <div className="absolute left-[31px] top-[84px] flex h-[10px] w-[30px] items-center justify-center gap-[3px] rounded-[3px] bg-[#8b9097] text-[7px] font-normal text-[#cdd1d4]">
      WCS <span className="h-[3px] w-[4px] border border-b-0 border-[#a9aeb4]" />
    </div>
  </div>
);

const NavBar = () => (
  <svg width="22" height="138" viewBox="0 0 22 138" fill="none" className="absolute left-[1257px] top-[155px]">
    <rect width="21.500" height="138" rx="2" fill="#596162" />
    <g stroke="#454d50" strokeWidth=".9">
      <circle cx="17.500" cy="3.500" r="1.800" />
      <path d="M7 12h8l3 3v8l-3 3H7l-3-3v-8z" /><circle cx="11" cy="19" r="4" />
      <path d="M10 32h2M10 79h2M10 104h2" />
      <path d="M7 51c-6-6 0-10 3-6m-1-3v5m2-6v6m2-7v7m3-6v6c0 9-8 10-11 4" />
      <path d="m3 58 10 10M13 58 3 68M11 67h7l-2 5-5-1z" />
      <path d="M11 83v16M4 91h14M8 86l3-3 3 3M8 96l3 3 3-3M6 88l-3 3 3 3M16 88l3 3-3 3M7 90c2-3 7-3 8 1" />
      <path d="M4 111h14M4 114h14M4 116h10v9H4z" />
      <circle cx="17.500" cy="134" r="1.800" />
    </g>
    <path d="m7 118 5 3-5 3z" fill="#394144" />
  </svg>
);

const Viewport = () => (
  <main className="relative h-[544px] overflow-hidden bg-[#1f282f]">
    <div className="flex items-center justify-between pt-[4px] pl-px">
      <span className="leading-[10px] tracking-[-0.1px]">[−][Custom View][Realistic]</span>
      <div className="flex">
        <Cell w="w-[13px]"><Ic n="min" s={9} /></Cell>
        <Cell w="w-[14px]"><Ic n="restore" s={9} /></Cell>
        <Cell w="w-[17px]"><Ic n="close" s={9} /></Cell>
      </div>
    </div>
    <Saddle />
    <SelectedMesh />
    <ViewCube />
    <NavBar />
    <div className="absolute left-[925px] top-[501px] flex flex-col items-start gap-[2px] font-['Liberation_Mono'] text-[8px] tracking-[0.080px] text-[#adb2af]">
      <span className="h-[11.500px] bg-[#4b524f] px-px leading-[12px]">Command: *Cancel*</span>
      <span className="h-[11.500px] bg-[#686e6b] px-px leading-[12px] text-[#e4e6e3]">Command: MESHSMOOTH</span>
    </div>
    <div className="absolute left-[256px] top-[527px] flex h-[18px] w-[767px] items-center bg-[#2c343c]">
      <div className="ml-[2px] h-3 w-[4px] border-x border-dotted border-[#9aa1a7]" />
      <Cell w="w-[12px]"><Ic n="close" s={10} /></Cell>
      <Cell w="w-[19px]"><Ic n="wrench" s={12} /></Cell>
      <div className="flex h-full flex-1 items-center bg-white pl-px pr-[3px] font-['DejaVu_Sans_Mono'] text-[7.500px] tracking-[0.280px] text-[#33373a]">
        <Ic n="yellowMesh" />
        <svg width="5" height="3" viewBox="0 0 5 3" className="mx-px"><path d="M0 0h5L2.500 3z" fill="#4a4f55" /></svg>
        <span className="ml-[3px] font-bold tracking-[0.280px] text-black">MESHSMOOTH</span>
        <span className="ml-[3px] flex-1">Select objects to convert:</span>
        <svg width="4" height="3" viewBox="0 0 4 3"><path d="M0 3h4L2 0z" fill="#4a4f55" /></svg>
      </div>
    </div>
  </main>
);

const LayoutTab = ({ w, label, active }: { w: string; label: string; active?: boolean }) => (
  <div className={clsx('flex h-[13px] items-center justify-center rounded-b-md pb-[2px]', w, active ? 'bg-[#3b4550] font-bold text-white' : 'bg-[#28313a] text-[#9fa6ad]')}>{label}</div>
);

const StatusBtn = ({ w, on, children }: { w: string; on?: boolean; children: React.ReactNode }) => (
  <div className={clsx('flex h-4 shrink-0 items-center justify-center', w, on ? 'bg-[#528bc1]' : 'bg-[#303943]')}>{children}</div>
);

const St = ({ d, fill, color = '#cdd1d4', w = 1 }: { d: string; fill?: boolean; color?: string; w?: number }) => (
  <svg width="12" height="12" viewBox="0 0 12 12" fill={fill ? color : 'none'} stroke={fill ? 'none' : color} strokeWidth={w} className="shrink-0"><path d={d} /></svg>
);

const figure = 'M5 .8h2l.6 4 4 6.200-2.400-.7L6 7.500l-3.200 2.800L.4 11l4-6.200z';

const Gear = ({ size }: { size: number }) => (
  <svg width={size} height={size} viewBox="0 0 14 14" fill="none" stroke="#e9ebec">
    <circle cx="7" cy="7" r="3.700" strokeWidth="2" />
    <circle cx="7" cy="7" r="5.500" strokeWidth="2.200" strokeDasharray="2.200 2.120" />
  </svg>
);

const StatusArea = () => (
  <footer className="flex h-[32px] justify-between border-t border-[#262f37] bg-[#222a32]">
    <div className="flex gap-[2px] pl-[8px]">
      <LayoutTab w="w-[38px]" label="Model" active />
      <LayoutTab w="w-[41px]" label="Layout1" />
      <LayoutTab w="w-[41px]" label="Layout2" />
      <LayoutTab w="w-[18px]" label="+" />
    </div>
    <div className="flex items-center self-end pb-px pt-[8px]">
      <StatusBtn w="w-[32px]"><span className="text-white tracking-[-0.02em]">MODEL</span></StatusBtn>
      <div className="w-px" />
      <StatusBtn w="w-[17px]"><St d="M3.500 1v10M6 1v10M8.500 1v10M1 3.500h10M1 6h10M1 8.500h10" w={0.8} /></StatusBtn>
      <StatusBtn w="w-[16px]"><St fill d="M2 2h1.500v1.500H2zM5.300 2h1.500v1.500H5.300zM8.600 2h1.500v1.500H8.600zM2 5.300h1.500v1.500H2zM5.300 5.300h1.500v1.500H5.300zM8.600 5.300h1.500v1.500H8.600zM2 8.600h1.500v1.500H2zM5.300 8.600h1.500v1.500H5.300zM8.600 8.600h1.500v1.500H8.600z" /></StatusBtn>
      <StatusBtn w="w-[12px]"><Caret /></StatusBtn>
      <div className="w-px" />
      <StatusBtn w="w-[16px]" on><St d="M2 1v10h10M2 8h3v3" /></StatusBtn>
      <StatusBtn w="w-[15px]"><St d="M10 8A4.500 4.500 0 1 1 8 2M6 6.500h5.500M6 6.500 9.500 3" color="#9ea5ab" /></StatusBtn>
      <StatusBtn w="w-[13px]"><Caret /></StatusBtn>
      <StatusBtn w="w-[14px]"><St d="m1 2 5 5V2M6 7v4M8 3v6" color="#69737c" /></StatusBtn>
      <StatusBtn w="w-[12px]"><Caret /></StatusBtn>
      <StatusBtn w="w-[16px]" on><St d="M1 9h10M2 9l7-6" /></StatusBtn>
      <StatusBtn w="w-[15px]" on><St d="M3 3h8v8H3zM1 1h3v3H1z" /></StatusBtn>
      <StatusBtn w="w-[12px]"><Caret /></StatusBtn>
      <div className="w-px" />
      <StatusBtn w="w-[16px]" on><St fill d={figure} color="#fff" /></StatusBtn>
      <StatusBtn w="w-[16px]"><St fill d={figure + 'M9 1l2.500 1.500-2 1.500z'} /></StatusBtn>
      <StatusBtn w="w-[16px]"><St fill d={figure} /></StatusBtn>
      <StatusBtn w="w-[15px]">1:1</StatusBtn>
      <StatusBtn w="w-[7px]"><Caret /></StatusBtn>
      <div className="w-[2px]" />
      <StatusBtn w="w-[16px]"><Gear size={13} /></StatusBtn>
      <StatusBtn w="w-[11px]"><Caret /></StatusBtn>
      <StatusBtn w="w-[16px]"><St d="M6 .5v11M.5 6h11" w={1.700} /></StatusBtn>
      <div className="w-[2px]" />
      <StatusBtn w="w-[16px]"><St d="M1 1h4v4H1zM4 11 6.500 7.500 9 11zM7 3.500h4v4H7z" color="#8b949c" w={0.800} /></StatusBtn>
      <div className="w-[2px]" />
      <StatusBtn w="w-[16px]">
        <svg width="14" height="14" viewBox="0 0 14 14"><path d="M2 1h9v7H2z" fill="#397fbf" /><path d="M4 1h5v2H4z" fill="#91cdf3" /><path d="M0 7h6v6H0z" fill="#e5bd54" /><path d="m6 9 3 3 4-5" fill="none" stroke="#62ba5d" strokeWidth="2" /></svg>
      </StatusBtn>
      <div className="w-[4px]" />
      <StatusBtn w="w-[15px]"><St d="M1 2h10v8H1zM7.500 4H9v1.500M3 6.500V8h1.500" /></StatusBtn>
      <StatusBtn w="w-[17px]"><St d="M.5 2h11M.5 6h11M.5 10h11" w={1.300} /></StatusBtn>
    </div>
  </footer>
);

const apps: { name: string; w: string; open?: boolean; active?: boolean; icon: React.ReactNode }[] = [
  { name: 'start', w: 'w-[32px]', icon: <path d="m2.500 4 5-.7v4.500h-5zM8.500 3.200 14 2.500v5.300H8.500zM2.500 8.800h5v4.500l-5-.7zM8.500 8.800H14V14l-5.500-.7z" fill="#f4f5f5" /> },
  { name: 'search', w: 'w-[32px]', icon: <><circle cx="9.500" cy="6" r="3.700" stroke="#e4e6e7" /><path d="m7 9-4.500 5" stroke="#e4e6e7" /></> },
  { name: 'tasks', w: 'w-[32px]', icon: <path d="M3 3v2h6V3M3 6.500h6v4H3zM3 14v-2h6v2M12 3v2M12 7v7M11 6h2" stroke="#d9dcde" /> },
  { name: 'edge', w: 'w-[36px]', icon: <><circle cx="8" cy="8" r="7.800" fill="#2282cf" /><path d="M1 6C3-1 14-1 15.700 7c.5 4-5 4.500-6 2.500 1-3-2-5-5-4C2.500 6 1.500 7 .5 9z" fill="#53c5ae" /><path d="M5 7c-2 4 1 8 6 7 2 0 3-1 3.500-2-3 1-7 0-6-4C7.500 6 6 6 5 7z" fill="#14548f" /><path d="M9.500 9C9 12 14 12 15 10c.3 3-5 3-6 0z" fill="#19212a" /></> },
  { name: 'files', w: 'w-[29px]', open: true, icon: <><path d="M1 2h5l1.500 2H15v9.500H1z" fill="#e3ae39" /><path d="M1 5.500h14v8.500H1z" fill="#f7d574" /><path d="M3 9h10v5h-2.500v-2h-5v2H3z" fill="#4796cd" /></> },
  { name: 'store', w: 'w-[36px]', icon: <><path d="M5 4V1h6v3" stroke="#42a0dc" strokeWidth="1.300" /><path d="M0 4h16v10l-2 2H2l-2-2z" fill="#eef0f1" /><path d="M5 6.500h2.500V9H5z" fill="#db5735" /><path d="M8.500 6.500H11V9H8.500z" fill="#7bab3d" /><path d="M5 10h2.500v2.500H5z" fill="#35a0dc" /><path d="M8.500 10H11v2.500H8.500z" fill="#e5b33a" /></> },
  { name: 'outlook', w: 'w-[29px]', open: true, icon: <><path d="M4 1h11v7L8 11H4z" fill="#3497df" /><path d="M9 1h6v4H9z" fill="#5cc3f1" /><path d="m4 9 6 3 5.500-4v7H4z" fill="#1b75bf" /><path d="M.5 4.500h8V12h-8z" fill="#1267b4" /><circle cx="4.500" cy="8.200" r="2" stroke="#fff" strokeWidth="1.200" /></> },
  { name: 'chrome', w: 'w-[36px]', open: true, icon: <><circle cx="8" cy="8" r="7.500" fill="#e9bf3c" /><path d="M1.500 4.300A7.500 7.500 0 0 1 14.700 4.600H8L5 9.500z" fill="#d8473c" /><path d="M1.500 4.300A7.500 7.500 0 0 0 7.500 15.500L11 10 5 9.500z" fill="#43a155" /><circle cx="8" cy="8" r="3.600" fill="#f4f4f4" /><circle cx="8" cy="8" r="2.700" fill="#3e7fdc" /></> },
  { name: 'calc', w: 'w-[30px]', icon: <><path d="M2.500 0h11v16h-11z" fill="#61717e" /><path d="M2.500 0h11v4h-11z" fill="#4fb6df" /><path d="M4 6h2v2H4zM7 6h2v2H7zM10 6h2v2h-2zM4 9h2v2H4zM7 9h2v2H7zM4 12h2v2H4zM7 12h2v2H7z" fill="#e5e8e9" /><path d="M10 9h2v5h-2z" fill="#223f75" /></> },
  { name: 'paint', w: 'w-[34px]', icon: <><path d="M.5 9C1 4 7 1 11 4c3 3 0 4 1 7s-6 4-9 2c-1.500-1 2-2 0-2.500C1 10 .5 10 .5 9z" fill="#e4e0d4" /><circle cx="4.500" cy="7" r="1.300" fill="#5faf5b" /><circle cx="8" cy="5.500" r="1.300" fill="#dd5c44" /><circle cx="9" cy="11" r="1.300" fill="#4689cb" /><path d="m8 10 6-8.500" stroke="#d3a668" strokeWidth="1.500" /></> },
  { name: 'snip', w: 'w-[32px]', open: true, icon: <><ellipse cx="6.500" cy="5" rx="6" ry="3.500" transform="rotate(-20 6.500 5)" fill="#eee7e4" stroke="#c84f4b" strokeWidth=".7" /><path d="m2 5 9-2M7 7l4 3M11 7l-4 4" stroke="#d0504b" strokeWidth=".8" /><circle cx="12.500" cy="11" r="2" stroke="#4a9ccc" strokeWidth="1.300" /><circle cx="8" cy="13" r="2" stroke="#4a9ccc" strokeWidth="1.300" /></> },
  { name: 'cmd', w: 'w-[34px]', icon: <><path d="M.5 2h15v12H.5z" fill="#090c0f" stroke="#7d8387" /><path d="M1 2.500h14" stroke="#b4b9bc" /><path d="m2.500 6 2 1-2 1M5.500 8.500h3" stroke="#777c80" strokeWidth=".7" /></> },
  { name: 'settings', w: 'w-[32px]', open: true, icon: <><circle cx="8" cy="8" r="3.500" stroke="#f5f6f6" strokeWidth="1.700" /><circle cx="8" cy="8" r="5.200" stroke="#f5f6f6" strokeWidth="1.800" strokeDasharray="2.100 1.984" /></> },
  { name: 'acad', w: 'w-[32px]', open: true, active: true, icon: <><path d="M0 0h16v16H0z" fill="#f1e3e2" /><path d="M2.500 14 6.500 2h3l4 12h-3L9.800 11H6.200l-.8 3zM7 8.500h2L8 5z" fill="#b82330" fillRule="evenodd" /></> },
];

const Taskbar = () => (
  <div className="flex h-[27px] bg-[#17212a]">
    {apps.map((a) => (
      <div key={a.name} className={clsx('flex flex-col items-center', a.w, a.active && 'bg-[#414a52]')}>
        <div className="flex h-[25px] items-center pt-px"><svg width="16" height="16" viewBox="0 0 16 16" fill="none">{a.icon}</svg></div>
        {a.open && <div className={clsx('h-[2px] bg-[#6faedb]', a.active ? 'w-full' : 'w-[27px]')} />}
      </div>
    ))}
    <div className="ml-auto flex w-[48px] flex-col items-center text-[7.600px] leading-[12px] text-white">
      <span>4:42 PM</span>
      <span>14/09/2022</span>
    </div>
  </div>
);

export default function App() {
  return (
    <div className="h-[720px] w-[1280px] overflow-hidden bg-[#1f282f] font-['Open_Sans',sans-serif] text-[8px] leading-[11px] tracking-[-0.02em] text-[#d8dbde]">
      <TitleBar />
      <MenuTabs />
      <Ribbon />
      <FileTabs />
      <Viewport />
      <StatusArea />
      <Taskbar />
    </div>
  );
}
